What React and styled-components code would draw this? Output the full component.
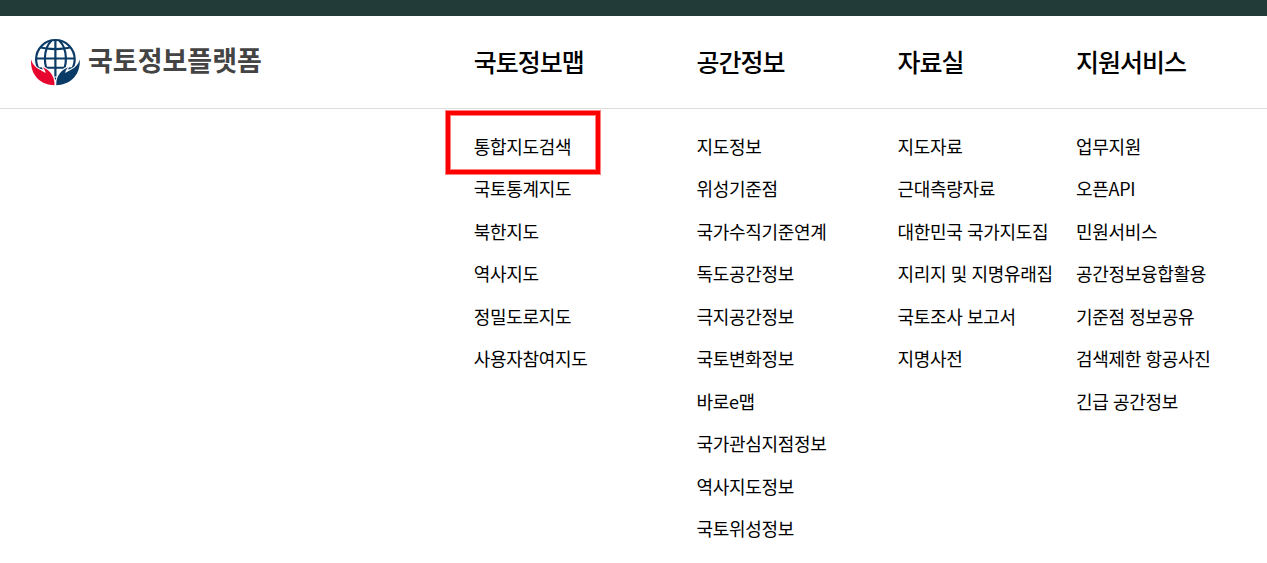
import React from 'react';
import styled, { createGlobalStyle } from 'styled-components';

const MENU = [
    {
        title: '국토정보맵',
        items: ['통합지도검색', '국토통계지도', '북한지도', '역사지도', '정밀도로지도', '사용자참여지도'],
    },
    {
        title: '공간정보',
        items: [
            '지도정보', '위성기준점', '국가수직기준연계', '독도공간정보', '극지공간정보',
            '국토변화정보', '바로e맵', '국가관심지점정보', '역사지도정보', '국토위성정보',
        ],
    },
    {
        title: '자료실',
        items: ['지도자료', '근대측량자료', '대한민국 국가지도집', '지리지 및 지명유래집', '국토조사 보고서', '지명사전'],
    },
    {
        title: '지원서비스',
        items: ['업무지원', '오픈API', '민원서비스', '공간정보융합활용', '기준점 정보공유', '검색제한 항공사진', '긴급 공간정보'],
    },
];

const HIGHLIGHTED = '통합지도검색';

const HAND = 'M1 21.5C2.5 26.500 5.500 29.500 9 31.200L15.600 35C15.400 33 14.700 31.500 12.600 29.200C18.500 31.500 25 37 24.500 47.200C12 47.200 .2 38.500 1 21.500z';

const LogoMark = () => (
    <svg width="50" height="48" viewBox="0 0 50 48" fill="none">
        <g stroke="#0a3a66" strokeWidth="2.2">
            <circle cx="25.400" cy="21.300" r="19.300" />
            <path d="M25.400 2v36.500M5.800 20.500h39.200M10 9.300c8 2.300 22.800 2.300 30.800 0M8.500 30.600c10-1.300 23.800-1.300 33.800 0" />
            <path d="M21.500 2.500C13 11 13 28 20 37.500M29.300 2.500c8.500 8.500 8.500 25.500 1.500 35" />
        </g>
        <g stroke="#fff" strokeWidth="2" strokeLinejoin="round">
            <path d={HAND} />
            <path d={HAND} transform="matrix(-1 0 0 1 50.800 0)" />
        </g>
        <path d={HAND} fill="#e9062e" />
        <path d={HAND} fill="#0a3a66" transform="matrix(-1 0 0 1 50.800 0)" />
    </svg>
);

const App = () => (
    <>
        <GlobalStyle />
        <TopBar />
        <Header>
            <Logo>
                <LogoMark />
                <LogoText>국토정보플랫폼</LogoText>
            </Logo>
            {MENU.map(({ title }) => <MenuTitle key={title}>{title}</MenuTitle>)}
        </Header>
        <SubMenu>
            {MENU.map(({ title, items }) => (
                <MenuList key={title}>
                    {items.map(item => (
                        <MenuItem key={item} $marked={item === HIGHLIGHTED}>{item}</MenuItem>
                    ))}
                </MenuList>
            ))}
        </SubMenu>
    </>
)

const GlobalStyle = createGlobalStyle`
*, *::after {
    box-sizing: border-box;
}
body {
    margin: 0;
    background: #fff;
    color: #000;
    font-family: "Noto Sans CJK KR", "Noto Sans", sans-serif;
    overflow: hidden;
}
`

const TopBar = styled.div`
height: 16px;
background: #233b38;
`

const Header = styled.header`
display: grid;
grid-template-columns: 443.8px 222.6px 201px 178.6px 1fr;
align-items: center;
height: 93px;
padding-left: 30px;
border-bottom: 1px solid #ddd;
`

const Logo = styled.div`
display: flex;
align-items: center;
`

const LogoText = styled.span`
margin: -4px 0 0 8px;
color: #444;
font-size: 27px;
font-weight: 700;
line-height: 40px;
white-space: nowrap;
`

const MenuTitle = styled.h2`
margin: -2px 0 0;
font-size: 25px;
font-weight: 500;
line-height: 36px;
letter-spacing: -1px;
white-space: nowrap;
`

const SubMenu = styled.nav`
display: grid;
grid-template-columns: 222.6px 201px 178.6px 1fr;
padding: 16px 0 0 473.8px;
`

const MenuList = styled.ul`
margin: 0;
padding: 0;
list-style: none;
`

const MenuItem = styled.li`
position: relative;
height: 42.45px;
font-size: 18px;
line-height: 42px;
letter-spacing: -0.3px;
word-spacing: 0.8px;
white-space: nowrap;

${({ $marked }) => $marked && `
&::after {
    content: '';
    position: absolute;
    top: -14px;
    left: -28px;
    width: 154px;
    height: 63px;
    border: 4px solid #f00;
    box-shadow: 0 0 0 1px #ff8080, inset 0 0 0 1px #ff8080;
}
`}
`

export default App;
